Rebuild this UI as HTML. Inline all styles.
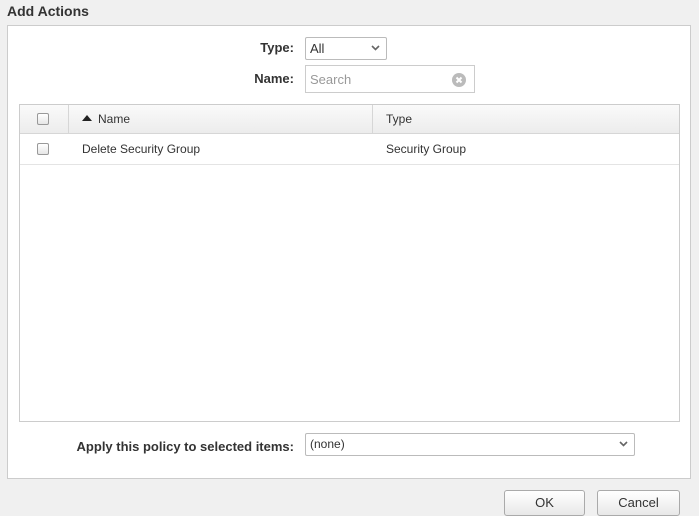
<!DOCTYPE html>
<html><head><style>
body{margin:0;width:699px;height:521px;background:#f0f0f0;font-family:"Liberation Sans",Arial,sans-serif;font-size:12px;color:#333;position:relative;overflow:hidden}
.a{position:absolute;box-sizing:border-box}
.lbl{font-weight:bold;font-size:13px;color:#333;text-align:right}
.cb{width:12px;height:12px;border:1px solid #999;border-radius:2px;background:linear-gradient(#fff,#e6e6e6)}
.btn{border:1px solid #aaa;border-radius:3px;background:linear-gradient(#fff,#e8e8e8);text-align:center;line-height:24px;font-size:13px;color:#333}
</style></head><body>
<div class="a" style="left:7px;top:3px;font-weight:bold;font-size:14px;color:#333">Add Actions</div>
<div class="a" style="left:7px;top:25px;width:684px;height:454px;background:#fff;border:1px solid #ccc"></div>
<div class="a lbl" style="left:200px;top:40px;width:94px">Type:</div>
<div class="a" style="left:305px;top:37px;width:82px;height:23px;border:1px solid #bbb;border-radius:2px;padding:3px 4px;font-size:13px">All<svg style="position:absolute;right:6px;top:7px" width="9" height="6"><path d="M1 1L4.5 4.5L8 1" stroke="#666" stroke-width="1.6" fill="none"/></svg></div>
<div class="a lbl" style="left:200px;top:71px;width:94px">Name:</div>
<div class="a" style="left:305px;top:65px;width:170px;height:28px;border:1px solid #ccc;padding:6px 4px;font-size:13px;color:#999">Search<svg style="position:absolute;right:8px;top:7px" width="14" height="14"><circle cx="7" cy="7" r="7" fill="#bbb"/><path d="M4.5 4.5L9.5 9.5M9.5 4.5L4.5 9.5" stroke="#fff" stroke-width="2"/></svg></div>
<div class="a" style="left:19px;top:104px;width:661px;height:318px;border:1px solid #ccc"></div>
<div class="a" style="left:20px;top:105px;width:659px;height:29px;background:linear-gradient(#fafafa,#ececec);border-bottom:1px solid #d6d6d6"></div>
<div class="a" style="left:68px;top:105px;width:1px;height:28px;background:#d6d6d6"></div>
<div class="a" style="left:372px;top:105px;width:1px;height:28px;background:#d6d6d6"></div>
<div class="a cb" style="left:37px;top:113px"></div>
<svg class="a" style="left:82px;top:115px" width="10" height="6"><path d="M0 6L5 0L10 6Z" fill="#222"/></svg>
<div class="a" style="left:98px;top:112px">Name</div>
<div class="a" style="left:386px;top:112px">Type</div>
<div class="a cb" style="left:37px;top:143px"></div>
<div class="a" style="left:82px;top:142px">Delete Security Group</div>
<div class="a" style="left:386px;top:142px">Security Group</div>
<div class="a" style="left:20px;top:164px;width:659px;height:1px;background:#e4e4e4"></div>
<div class="a lbl" style="left:40px;top:439px;width:254px">Apply this policy to selected items:</div>
<div class="a" style="left:305px;top:433px;width:330px;height:23px;border:1px solid #bbb;border-radius:2px;padding:3px 4px">(none)<svg style="position:absolute;right:6px;top:7px" width="9" height="6"><path d="M1 1L4.5 4.5L8 1" stroke="#666" stroke-width="1.6" fill="none"/></svg></div>
<div class="a btn" style="left:504px;top:490px;width:81px;height:26px">OK</div>
<div class="a btn" style="left:597px;top:490px;width:83px;height:26px">Cancel</div>
<div class="a" style="left:0;top:516px;width:699px;height:5px;background:#fff"></div>
</body></html>
